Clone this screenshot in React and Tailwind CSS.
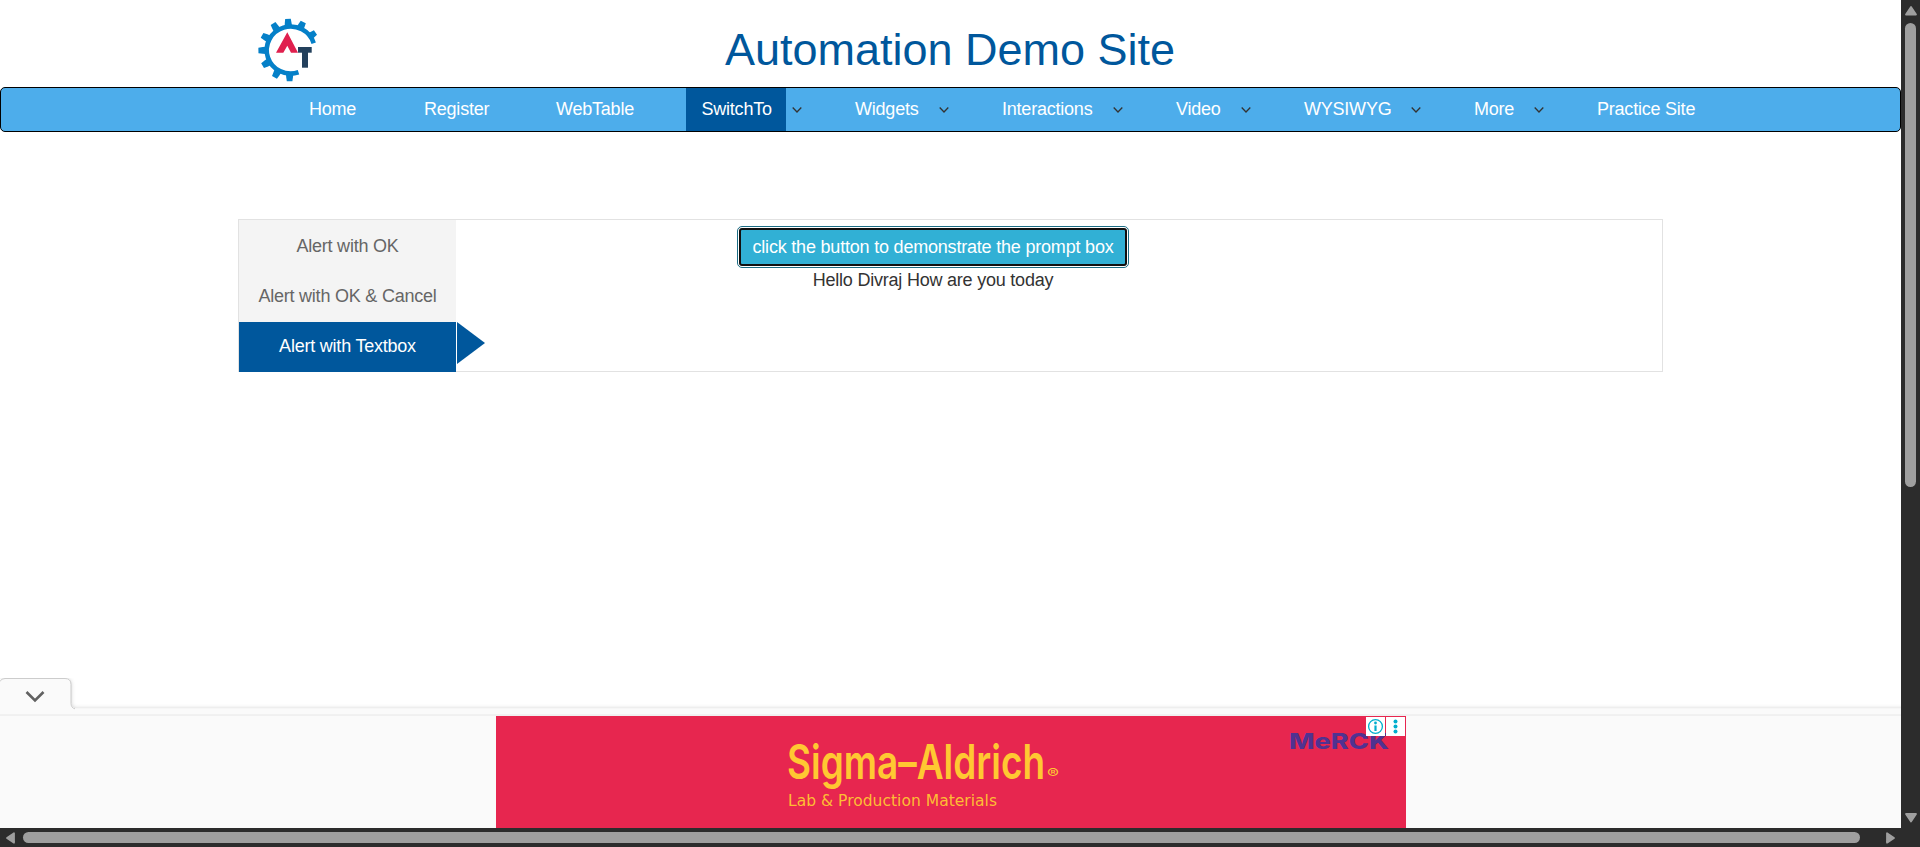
import React from "react";

const NAV = [
  { label: "Home", width: "w-[115px]" },
  { label: "Register", width: "w-[132px]" },
  { label: "WebTable", width: "w-[147px]" },
  { label: "SwitchTo", width: "w-[152px]", active: true, caret: "pl-[5px]" },
  { label: "Widgets", width: "w-[147px]", caret: "pl-[20px]" },
  { label: "Interactions", width: "w-[174px]", caret: "pl-[20px]" },
  { label: "Video", width: "w-[128px]", caret: "pl-[19px]" },
  { label: "WYSIWYG", width: "w-[170px]", caret: "pl-[19px]" },
  { label: "More", width: "w-[123px]", caret: "pl-[19px]" },
  { label: "Practice Site", width: "w-[140px]" },
];

const TEETH = [-93, -64, -34, -122, -152, 179, 150, 119, 90];

function Caret() {
  return (
    <svg className="block" width="12" height="8" viewBox="0 0 12 8" fill="none" stroke="#333" strokeWidth="1.3">
      <path d="M1.700 1.500 6 6l4.300-4.500" />
    </svg>
  );
}

function Logo() {
  return (
    <svg className="block" width="64" height="64" viewBox="257 18 64 64">
      <path d="M313.700 43.300A24 23.500 0 1 0 298.500 72.300" fill="none" stroke="#0580c8" strokeWidth="4.600" />
      {TEETH.map((a) => (
        <path key={a} d="M313 46.300l3.500.300 4.300.600v5.600l-4.300.600-3.500.300z" fill="#0580c8" transform={`rotate(${a} 289.600 50)`} />
      ))}
      <path d="M287.300 32.300 298 52.800h-7l-3.700-7-4 7h-7.300z" fill="#e0204e" />
      <rect x="298" y="47" width="13.700" height="5.700" fill="#23405c" />
      <rect x="302" y="47" width="6" height="20.700" fill="#23405c" />
    </svg>
  );
}

function Header() {
  return (
    <header className="grid h-[87px] grid-cols-[257px_64px_1fr_321px] pt-[18px]">
      <div />
      <Logo />
      <h1 className="pr-px text-center text-[45px] leading-[64px] text-[#00579c]">
        Automation Demo Site
      </h1>
    </header>
  );
}

function Nav() {
  return (
    <nav className="flex h-[45px] rounded-[5px] border border-black bg-[#4dadeb] pl-[292px] text-lg leading-[43px] tracking-[-0.22px] text-white">
      {NAV.map((n) => (
        <div key={n.label} className={`flex shrink-0 items-center ${n.width}`}>
          <a className={n.active ? "-ml-px h-[43px] w-[100px] bg-[#00579c] pl-[15.500px] whitespace-nowrap" : "pl-[16px] whitespace-nowrap"}>
            {n.label}
          </a>
          {n.caret && (
            <span className={n.caret}>
              <Caret />
            </span>
          )}
        </div>
      ))}
    </nav>
  );
}

function Panel() {
  return (
    <section className="mt-[87px] ml-[238px] flex h-[153px] w-[1425px] border border-[#e2e2e2] text-lg tracking-[-0.22px]">
      <div className="relative h-[152px] w-[217px] shrink-0 text-center leading-[50px] text-[#666]">
        <div className="h-[102px] bg-[#f4f4f4]">
          <div className="pt-px">Alert with OK</div>
          <div>Alert with OK &amp; Cancel</div>
        </div>
        <div className="h-[50px] bg-[#00579c] leading-[48px] text-white">Alert with Textbox</div>
        <svg className="absolute top-[102px] left-[218px]" width="28" height="42" viewBox="0 0 28 42">
          <path d="M0 0 28 21 0 42z" fill="#00579c" />
        </svg>
      </div>
      <div className="ml-[281px] flex w-[392px] flex-col items-center pt-[6px]">
        <button className="rounded-[5px] border border-[#1b6d85] bg-white p-px tracking-[-0.2px]">
          <span className="block h-[38px] w-[388px] rounded-[3px] border-2 border-[#101010] bg-[#31b0d5] text-center leading-[34px] whitespace-nowrap text-white">
            click the button to demonstrate the prompt box
          </span>
        </button>
        <p className="leading-[24px] text-[#333]">Hello Divraj How are you today</p>
      </div>
    </section>
  );
}

function Ad() {
  return (
    <svg className="ml-[496px] block" width="910" height="112" viewBox="496 716 910 112">
      <rect x="496" y="716" width="910" height="112" fill="#e7264f" />
      <g fill="#ffc832">
        <text x="787" y="778.500" fontFamily="Inter, sans-serif" fontWeight="600" fontSize="47.500" textLength="258" lengthAdjust="spacingAndGlyphs">Sigma–Aldrich</text>
        <text x="1047" y="778" fontFamily="Inter, sans-serif" fontSize="13" textLength="12" lengthAdjust="spacingAndGlyphs">®</text>
        <text x="788" y="806" fontFamily="'DejaVu Sans', sans-serif" fontSize="15.500" textLength="209" lengthAdjust="spacingAndGlyphs" fillOpacity=".95">Lab &amp; Production Materials</text>
      </g>
      <text x="1289" y="749" fontFamily="Inter, sans-serif" fontWeight="800" fontSize="21" textLength="100" lengthAdjust="spacingAndGlyphs" fill="#503291">MeRCK</text>
      <rect x="1366" y="717" width="19" height="19" fill="#fff" />
      <rect x="1386" y="717" width="19" height="19" fill="#fff" />
      <circle cx="1375.500" cy="726.500" r="6.900" fill="none" stroke="#00aecd" strokeWidth="1.300" />
      <circle cx="1375.500" cy="723" r="1.400" fill="#00aecd" />
      <path d="M1375.500 725.500v5.500" stroke="#00aecd" strokeWidth="2.200" />
      <circle cx="1395.500" cy="721.500" r="2" fill="#00aecd" />
      <circle cx="1395.500" cy="726.500" r="2" fill="#00aecd" />
      <circle cx="1395.500" cy="731.500" r="2" fill="#00aecd" />
    </svg>
  );
}

function BottomAd() {
  return (
    <aside className="mt-auto">
      <svg className="block" width="1901" height="38" viewBox="0 0 1901 38">
        <defs>
          <filter id="soft" filterUnits="userSpaceOnUse" x="-20" y="-10" width="1950" height="90">
            <feDropShadow dx="0" dy="0" stdDeviation="2" floodColor="#000" floodOpacity=".2" />
          </filter>
          <linearGradient id="line" x2="0" y2="1">
            <stop stopColor="#e8e8e8" />
            <stop offset="1" stopColor="#f4f4f4" />
          </linearGradient>
        </defs>
        <path d="M-10 1H65q6 0 6 6V25q0 6 6 6H1940V70H-10z" transform="translate(0 -.500)" fill="#fafafa" filter="url(#soft)" />
        <path d="M0 3.500q1-3 5-3H65q6 0 6 6V25q0 5 4 5.800" fill="none" stroke="#ccc" />
        <rect x="0" y="36.500" width="1901" height="1.500" fill="url(#line)" />
        <path d="m26.500 14 8.500 8.500 8.500-8.500" fill="none" stroke="#616161" strokeWidth="2.600" />
      </svg>
      <div className="bg-[#fafafa]">
        <Ad />
      </div>
    </aside>
  );
}

function VerticalBar() {
  return (
    <div className="flex w-[19px] flex-col items-center bg-[#2c2c2c]">
      <svg className="mt-[5px] block shrink-0" width="14" height="12" viewBox="0 0 14 12">
        <path d="M7 2 12 9.500H2z" fill="#9f9f9f" stroke="#9f9f9f" strokeWidth="1.800" strokeLinejoin="round" />
      </svg>
      <div className="mt-[6px] h-[464px] w-[11px] rounded-full bg-[#9f9f9f]" />
      <svg className="mt-auto mb-[4px] block shrink-0" width="14" height="12" viewBox="0 0 14 12">
        <path d="M7 9.500 2 2h10z" fill="#9f9f9f" stroke="#9f9f9f" strokeWidth="1.800" strokeLinejoin="round" />
      </svg>
    </div>
  );
}

function HorizontalBar() {
  return (
    <div className="flex h-[19px] w-full items-center bg-[#2c2c2c]">
      <svg className="ml-[5px] block" width="12" height="14" viewBox="0 0 12 14">
        <path d="M2 7 9 2.300v9.400z" fill="#9f9f9f" stroke="#9f9f9f" strokeWidth="1.800" strokeLinejoin="round" />
      </svg>
      <div className="ml-[6px] h-[11px] w-[1837px] rounded-full bg-[#9f9f9f]" />
      <svg className="ml-[25px] block" width="12" height="14" viewBox="0 0 12 14">
        <path d="M9 7 2 2.300v9.400z" fill="#9f9f9f" stroke="#9f9f9f" strokeWidth="1.800" strokeLinejoin="round" />
      </svg>
    </div>
  );
}

export default function App() {
  return (
    <div className="flex h-[847px] w-[1920px] flex-col overflow-hidden bg-white font-['Liberation_Sans',Arial,sans-serif]">
      <div className="flex h-[828px]">
        <main className="flex w-[1901px] flex-col">
          <Header />
          <Nav />
          <Panel />
          <BottomAd />
        </main>
        <VerticalBar />
      </div>
      <HorizontalBar />
    </div>
  );
}
